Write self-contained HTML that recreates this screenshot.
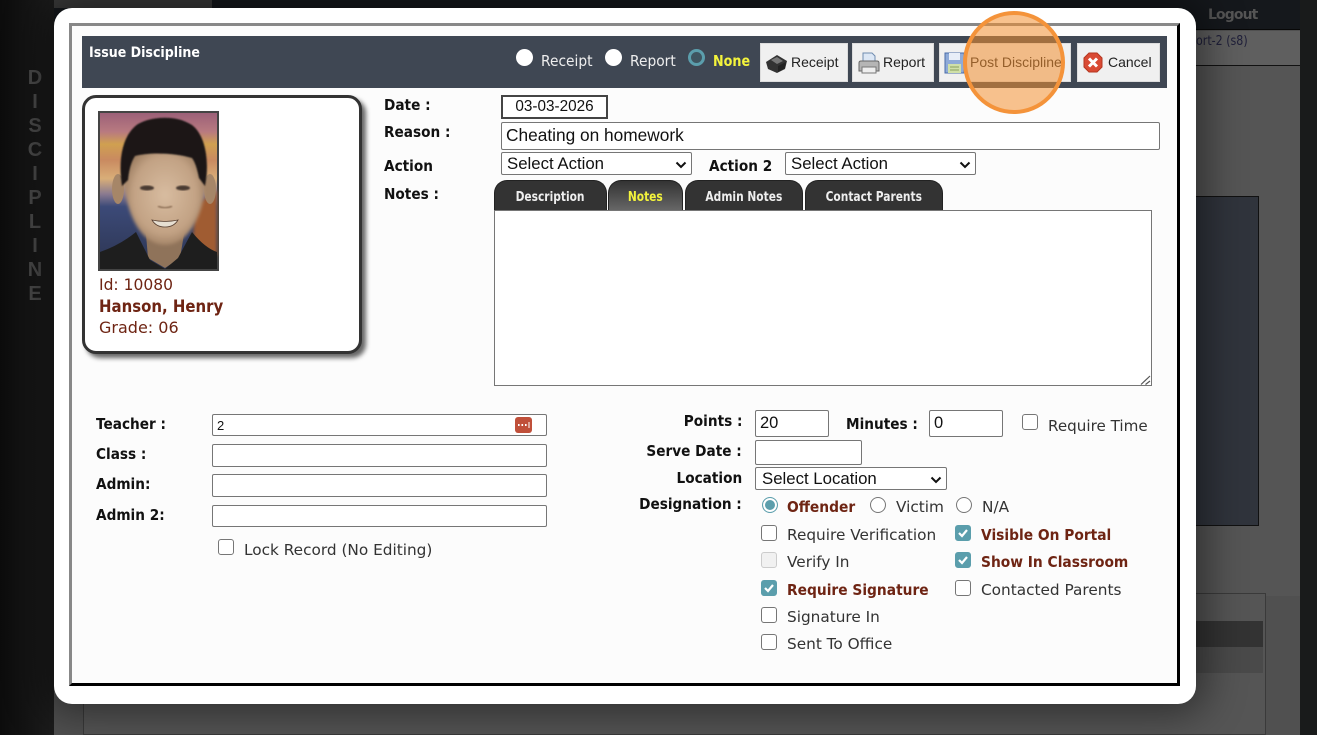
<!DOCTYPE html>
<html><head><meta charset="utf-8"><title>Issue Discipline</title>
<style>
html,body{margin:0;padding:0;width:1317px;height:735px;overflow:hidden;background:#141414}
*{box-sizing:border-box}
.a{position:absolute}
.t{position:absolute;white-space:nowrap;font-family:"DejaVu Sans",sans-serif;line-height:18px;font-size:15.3px;letter-spacing:0;color:#333;transform-origin:0 0}
.b{font-weight:bold;color:#111;font-size:15px;letter-spacing:0;transform:scaleX(.91)}
.b.ra{transform-origin:100% 0}
.r{font-weight:bold;color:#6e2413;font-size:15px;letter-spacing:0;transform:scaleX(.92)}
.h{color:#eee;font-size:15px;letter-spacing:0;transform:scaleX(.92)}
.i{position:absolute;background:#fff;border:1px solid #767676;border-radius:2px;font-family:"Liberation Sans",sans-serif;color:#111;white-space:nowrap}
.cb{position:absolute;width:16px;height:16px;border:1px solid #767676;border-radius:3px;background:#fff}
.cb.on{background:#5b9eac;border-color:#5b9eac}
.cb.on svg{position:absolute;left:0;top:0}
.cb.dis{background:#f1f1f1;border-color:#ccc}
.sel svg{position:absolute;right:4px;top:8px}
.btn{position:absolute;top:43px;height:39px;background:#f0f0f0;border:1px solid #ddd;font:14px/36px "Liberation Sans",sans-serif;color:#222;white-space:nowrap}
.btn span{position:absolute;top:0}
.btn svg{position:absolute}
.tab{position:absolute;top:180px;height:30px;background:#333;border-radius:13px 13px 0 0;color:#eee;font:bold 13px/34px "DejaVu Sans",sans-serif;text-align:center;border:1px solid #222;border-bottom:0}
.tab span{display:inline-block;transform:scaleX(.82)}
.dl{position:absolute;left:35px;width:0;display:flex;justify-content:center;font:bold 20px/24px "Liberation Sans",sans-serif;color:#484848}
</style></head>
<body>
<!-- Background page -->
<div class="a" style="left:0;top:0;width:54px;height:735px;background:linear-gradient(90deg,#0c0c0c,#1c1c1c)"></div>
<div class="a" style="left:54px;top:0;width:1246px;height:735px;background:#505050"></div>
<div class="a" style="left:1300px;top:0;width:17px;height:735px;background:#191b1b"></div>
<div class="a" style="left:54px;top:0;width:1246px;height:30px;background:#15181c;border-bottom:1px solid #080808"></div>
<div class="a" style="left:54px;top:0;width:158px;height:8px;background:#3a3a3a"></div>
<div class="a" style="left:54px;top:31px;width:1246px;height:35px;background:#5f5f5f;border-bottom:1px solid #111"></div>
<div class="a" style="left:1196px;top:66px;width:104px;height:530px;background:#555"></div>
<div class="a" style="left:1196px;top:196px;width:63px;height:330px;background:#30343c;border:1px solid #111;border-left:0"></div>
<div class="a" style="left:83px;top:593px;width:1183px;height:142px;background:#555;border:1px solid #3a3a3a"></div>
<div class="a" style="left:85px;top:621px;width:1178px;height:26px;background:#333"></div>
<div class="a" style="left:85px;top:647px;width:1178px;height:26px;background:#4a4a4a"></div>
<div class="t" style="left:1208px;top:6px;font-weight:bold;color:#555;font-size:14px;letter-spacing:-.9px">Logout</div>
<div class="t" style="left:1196px;top:32px;color:#20203a;font-size:13.5px;letter-spacing:0;transform:scaleX(.82)">ort-2 (s8)</div>
<div class="dl" style="top:66px">D</div><div class="dl" style="top:90px">I</div><div class="dl" style="top:114px">S</div><div class="dl" style="top:138px">C</div><div class="dl" style="top:162px">I</div><div class="dl" style="top:186px">P</div><div class="dl" style="top:210px">L</div><div class="dl" style="top:234px">I</div><div class="dl" style="top:258px">N</div><div class="dl" style="top:282px">E</div>

<!-- Modal -->
<div class="a" style="left:54px;top:8px;width:1142px;height:696px;background:#fff;border-radius:18px;box-shadow:0 0 40px 10px rgba(0,0,0,.45)"></div>
<div class="a" style="left:69px;top:23px;width:1111px;height:663px;background:#fcfcfc;border:3px solid;border-color:#888 #000 #000 #888"></div>
<div class="a" style="left:82px;top:36px;width:1085px;height:52px;background:#3f4753"></div>
<div class="t" style="left:89px;top:44px;color:#fff;font-weight:bold;font-size:14.5px;letter-spacing:0;transform:scaleX(.87)">Issue Discipline</div>

<div class="a" style="left:516px;top:49px;width:17px;height:17px;border-radius:50%;background:#fff"></div>
<div class="t h" style="left:541px;top:52px">Receipt</div>
<div class="a" style="left:605px;top:49px;width:17px;height:17px;border-radius:50%;background:#fff"></div>
<div class="t h" style="left:630px;top:52px">Report</div>
<div class="a" style="left:688px;top:49px;width:17px;height:17px;border-radius:50%;background:#3f5560;border:3px solid #5b9eac"></div>
<div class="t" style="left:713px;top:52px;color:#f4f43c;font-weight:bold;font-size:15px;letter-spacing:0;transform:scaleX(.85)">None</div>

<div class="btn" style="left:760px;width:88px"><svg style="left:4px;top:8px" width="24" height="22" viewBox="0 0 24 22"><path d="M1 10 12 3l10 6-2 8-8 4-9-4z" fill="#333"/><path d="M6 8 12 5l6 4-6 3z" fill="#777"/><path d="M13 14l8-4-1 6-7 4z" fill="#222"/></svg><span style="left:30px">Receipt</span></div>
<div class="btn" style="left:852px;width:82px"><svg style="left:4px;top:7px" width="24" height="24" viewBox="0 0 24 24"><path d="M6 2h9l3 3v8H6z" fill="#dce7f5" stroke="#6f8cb0"/><path d="M2 12q0-2 2-2h16q2 0 2 2v8H2z" fill="#b5b5b5" stroke="#666"/><path d="M5 16h14v6H5z" fill="#eee" stroke="#777"/></svg><span style="left:30px">Report</span></div>
<div class="btn" style="left:939px;width:132px"><svg style="left:4px;top:8px" width="21" height="22" viewBox="0 0 21 22"><path d="M1 1h19v20H1z" fill="#8eaad8" stroke="#4a6ca8"/><path d="M5 1h11v7H5z" fill="#e8eef8"/><path d="M4 12h13v9H4z" fill="#cfe0a8"/><path d="M6 15h9M6 18h9" stroke="#8aa060"/></svg><span style="left:30px">Post Discipline</span></div>
<div class="btn" style="left:1077px;width:83px"><svg style="left:5px;top:8px" width="20" height="21" viewBox="0 0 20 21"><path d="M6 1h8l5 5v9l-5 5H6l-5-5V6z" fill="#d94a34" stroke="#b5361f"/><path d="M6 6.500l8 8M14 6.500l-8 8" stroke="#fff" stroke-width="3"/></svg><span style="left:30px">Cancel</span></div>

<div class="a" style="left:963px;top:11px;width:102px;height:103px;border-radius:50%;background:rgba(243,143,50,.55);border:4px solid #f4933a"></div>

<!-- Student card -->
<div class="a" style="left:82px;top:95px;width:280px;height:259px;background:#fff;border:3px solid #333;border-radius:14px;box-shadow:4px 4px 5px #666"></div>
<svg class="a" style="left:98px;top:111px" width="121" height="160" viewBox="98 111 121 160">
<defs>
<linearGradient id="s" x1="0" y1="0" x2="0" y2="1"><stop offset="0" stop-color="#9c6078"/><stop offset=".12" stop-color="#b87a80"/><stop offset=".2" stop-color="#d0a050"/><stop offset=".3" stop-color="#c98a60"/><stop offset=".42" stop-color="#d9ae78"/><stop offset=".52" stop-color="#8a7a90"/><stop offset=".6" stop-color="#3c4a78"/><stop offset="1" stop-color="#2c3450"/></linearGradient>
<radialGradient id="sk" cx=".5" cy=".5" r=".55"><stop offset="0" stop-color="#d8bca0"/><stop offset=".7" stop-color="#c2a284"/><stop offset="1" stop-color="#97785c"/></radialGradient>
<filter id="bl"><feGaussianBlur stdDeviation="1.500"/></filter>
<filter id="bs"><feGaussianBlur stdDeviation=".8"/></filter>
</defs>
<rect x="98" y="111" width="121" height="160" fill="#444"/>
<rect x="100" y="113" width="117" height="156" fill="url(#s)"/>
<path d="M195 205 217 190v65h-25z" fill="#a05c30" filter="url(#bl)"/>
<path d="M145 222 148 258 165 268 180 258 186 222z" fill="#8f735a"/>
<path d="M100 269V252Q120 245 136 232L150 260 165 269 178 258 192 232Q205 248 217 252V269z" fill="#1e1e1e"/>
<ellipse cx="118" cy="189" rx="6" ry="15" fill="#a68668"/>
<ellipse cx="210" cy="189" rx="6" ry="15" fill="#a68668"/>
<path d="M124 175C124 210 140 245 165 245 190 245 206 210 206 175 206 155 190 145 165 145 140 145 124 155 124 175z" fill="url(#sk)" filter="url(#bl)"/>
<path d="M122 186C118 160 122 135 138 124 150 117 175 114 192 125 205 135 210 160 205 186L199 178C197 168 195 162 192 158 175 153 150 152 135 156 131 162 129 170 128 180z" fill="#1a1615" filter="url(#bs)"/>
<ellipse cx="147" cy="188" rx="7" ry="2.500" fill="#4a3a30" filter="url(#bs)"/>
<ellipse cx="183" cy="188" rx="7" ry="2.500" fill="#4a3a30" filter="url(#bs)"/>
<path d="M152 220q13 3 26 0-4 7-13 7t-13-7z" fill="#e6dfd2" stroke="#5a4234" stroke-width=".8"/>
<path d="M158 206q7 4 14 0" stroke="#987a60" fill="none" stroke-width="2" filter="url(#bs)"/>
</svg>
<div class="t" style="left:99px;top:276px;color:#6e2413;font-size:16px;letter-spacing:0;transform:scaleX(.97)">Id: 10080</div>
<div class="t" style="left:99px;top:298px;color:#6e2413;font-size:16.5px;font-weight:bold;letter-spacing:0;transform:scaleX(.905)">Hanson, Henry</div>
<div class="t" style="left:99px;top:319px;color:#6e2413;font-size:16px;letter-spacing:0">Grade: 06</div>

<!-- Top form -->
<div class="t b" style="left:384px;top:96px">Date :</div>
<div class="t b" style="left:384px;top:123px">Reason :</div>
<div class="t b" style="left:384px;top:157px">Action</div>
<div class="t b" style="left:384px;top:185px">Notes :</div>
<div class="i" style="left:501px;top:95px;width:107px;height:24px;border:2px solid #444;border-radius:0;font-size:15.3px;line-height:20px;text-align:center">03-03-2026</div>
<div class="i" style="left:501px;top:122px;width:659px;height:28px;font-size:17.3px;line-height:25px;padding-left:4px">Cheating on homework</div>
<div class="i sel" style="left:501px;top:152px;width:191px;height:23px;font-size:16.8px;line-height:21px;padding-left:5px">Select Action<svg width="12" height="8" viewBox="0 0 12 8"><path d="M1.500 1.500 6 6l4.500-4.500" fill="none" stroke="#111" stroke-width="2"/></svg></div>
<div class="t b" style="left:709px;top:157px">Action 2</div>
<div class="i sel" style="left:785px;top:152px;width:191px;height:23px;font-size:16.8px;line-height:21px;padding-left:5px">Select Action<svg width="12" height="8" viewBox="0 0 12 8"><path d="M1.500 1.500 6 6l4.500-4.500" fill="none" stroke="#111" stroke-width="2"/></svg></div>

<div class="tab" style="left:494px;width:113px"><span>Description</span></div>
<div class="tab" style="left:608px;width:75px;color:#f4f43c;background:linear-gradient(#333,#666)"><span>Notes</span></div>
<div class="tab" style="left:685px;width:118px"><span>Admin Notes</span></div>
<div class="tab" style="left:805px;width:138px"><span>Contact Parents</span></div>
<div class="a" style="left:494px;top:210px;width:658px;height:176px;background:#fff;border:1px solid #767676"></div>
<svg class="a" style="left:1139px;top:374px" width="12" height="11" viewBox="0 0 12 11"><path d="M11 2 2 10.500M11 7 6.500 10.500" stroke="#555" stroke-width="1.200"/></svg>

<!-- Left form -->
<div class="t b" style="left:96px;top:415px">Teacher :</div>
<div class="t b" style="left:96px;top:445px">Class :</div>
<div class="t b" style="left:96px;top:475px">Admin:</div>
<div class="t b" style="left:96px;top:506px">Admin 2:</div>
<div class="i" style="left:212px;top:414px;width:335px;height:22px;font-size:13px;line-height:21px;padding-left:4px">2</div>
<div class="a" style="left:515px;top:417px;width:17px;height:16px;background:#c0503a;border-radius:3px"></div>
<svg class="a" style="left:515px;top:417px" width="17" height="16"><path d="M3 8h1.600M6.500 8h1.600M10 8h1.600" stroke="#fff" stroke-width="2"/><path d="M14 5v6" stroke="#fff"/></svg>
<div class="i" style="left:212px;top:444px;width:335px;height:23px"></div>
<div class="i" style="left:212px;top:474px;width:335px;height:23px"></div>
<div class="i" style="left:212px;top:505px;width:335px;height:22px"></div>
<div class="cb" style="left:218px;top:539px"></div>
<div class="t" style="left:244px;top:541px">Lock Record (No Editing)</div>

<!-- Right form -->
<div class="t b ra" style="right:575px;top:412px">Points :</div>
<div class="i" style="left:755px;top:410px;width:74px;height:27px;font-size:16.5px;line-height:25px;padding-left:4px">20</div>
<div class="t b" style="left:846px;top:415px">Minutes :</div>
<div class="i" style="left:929px;top:410px;width:74px;height:27px;font-size:16.5px;line-height:25px;padding-left:4px">0</div>
<div class="cb" style="left:1022px;top:414px"></div>
<div class="t" style="left:1048px;top:417px;transform:scaleX(.99)">Require Time</div>
<div class="t b ra" style="right:575px;top:442px">Serve Date :</div>
<div class="i" style="left:755px;top:440px;width:107px;height:25px"></div>
<div class="t b ra" style="right:575px;top:469px">Location</div>
<div class="i sel" style="left:755px;top:467px;width:192px;height:23px;font-size:16.8px;line-height:21px;padding-left:6px">Select Location<svg width="12" height="8" viewBox="0 0 12 8"><path d="M1.500 1.500 6 6l4.500-4.500" fill="none" stroke="#111" stroke-width="2"/></svg></div>
<div class="t b ra" style="right:575px;top:495px">Designation :</div>

<div class="a" style="left:762px;top:497px;width:16px;height:16px;border-radius:50%;background:#fff;border:1px solid #5b9eac;box-shadow:inset 0 0 0 2px #fff,inset 0 0 0 8px #5b9eac"></div>
<div class="t r" style="left:787px;top:498px">Offender</div>
<div class="a" style="left:870px;top:497px;width:16px;height:16px;border-radius:50%;background:#fff;border:1px solid #767676"></div>
<div class="t" style="left:896px;top:498px">Victim</div>
<div class="a" style="left:956px;top:497px;width:16px;height:16px;border-radius:50%;background:#fff;border:1px solid #767676"></div>
<div class="t" style="left:982px;top:498px">N/A</div>

<div class="cb" style="left:761px;top:525px"></div>
<div class="t" style="left:787px;top:526px">Require Verification</div>
<div class="cb on" style="left:955px;top:525px"><svg width="14" height="14" viewBox="0 0 14 14"><path d="M3 7l3 3 5-6" fill="none" stroke="#fff" stroke-width="2.200"/></svg></div>
<div class="t r" style="left:981px;top:526px">Visible On Portal</div>
<div class="cb dis" style="left:761px;top:552px"></div>
<div class="t" style="left:787px;top:553px">Verify In</div>
<div class="cb on" style="left:955px;top:552px"><svg width="14" height="14" viewBox="0 0 14 14"><path d="M3 7l3 3 5-6" fill="none" stroke="#fff" stroke-width="2.200"/></svg></div>
<div class="t r" style="left:981px;top:553px">Show In Classroom</div>
<div class="cb on" style="left:761px;top:580px"><svg width="14" height="14" viewBox="0 0 14 14"><path d="M3 7l3 3 5-6" fill="none" stroke="#fff" stroke-width="2.200"/></svg></div>
<div class="t r" style="left:787px;top:581px">Require Signature</div>
<div class="cb" style="left:955px;top:580px"></div>
<div class="t" style="left:981px;top:581px">Contacted Parents</div>
<div class="cb" style="left:761px;top:607px"></div>
<div class="t" style="left:787px;top:608px">Signature In</div>
<div class="cb" style="left:761px;top:634px"></div>
<div class="t" style="left:787px;top:635px">Sent To Office</div>
</body></html>
